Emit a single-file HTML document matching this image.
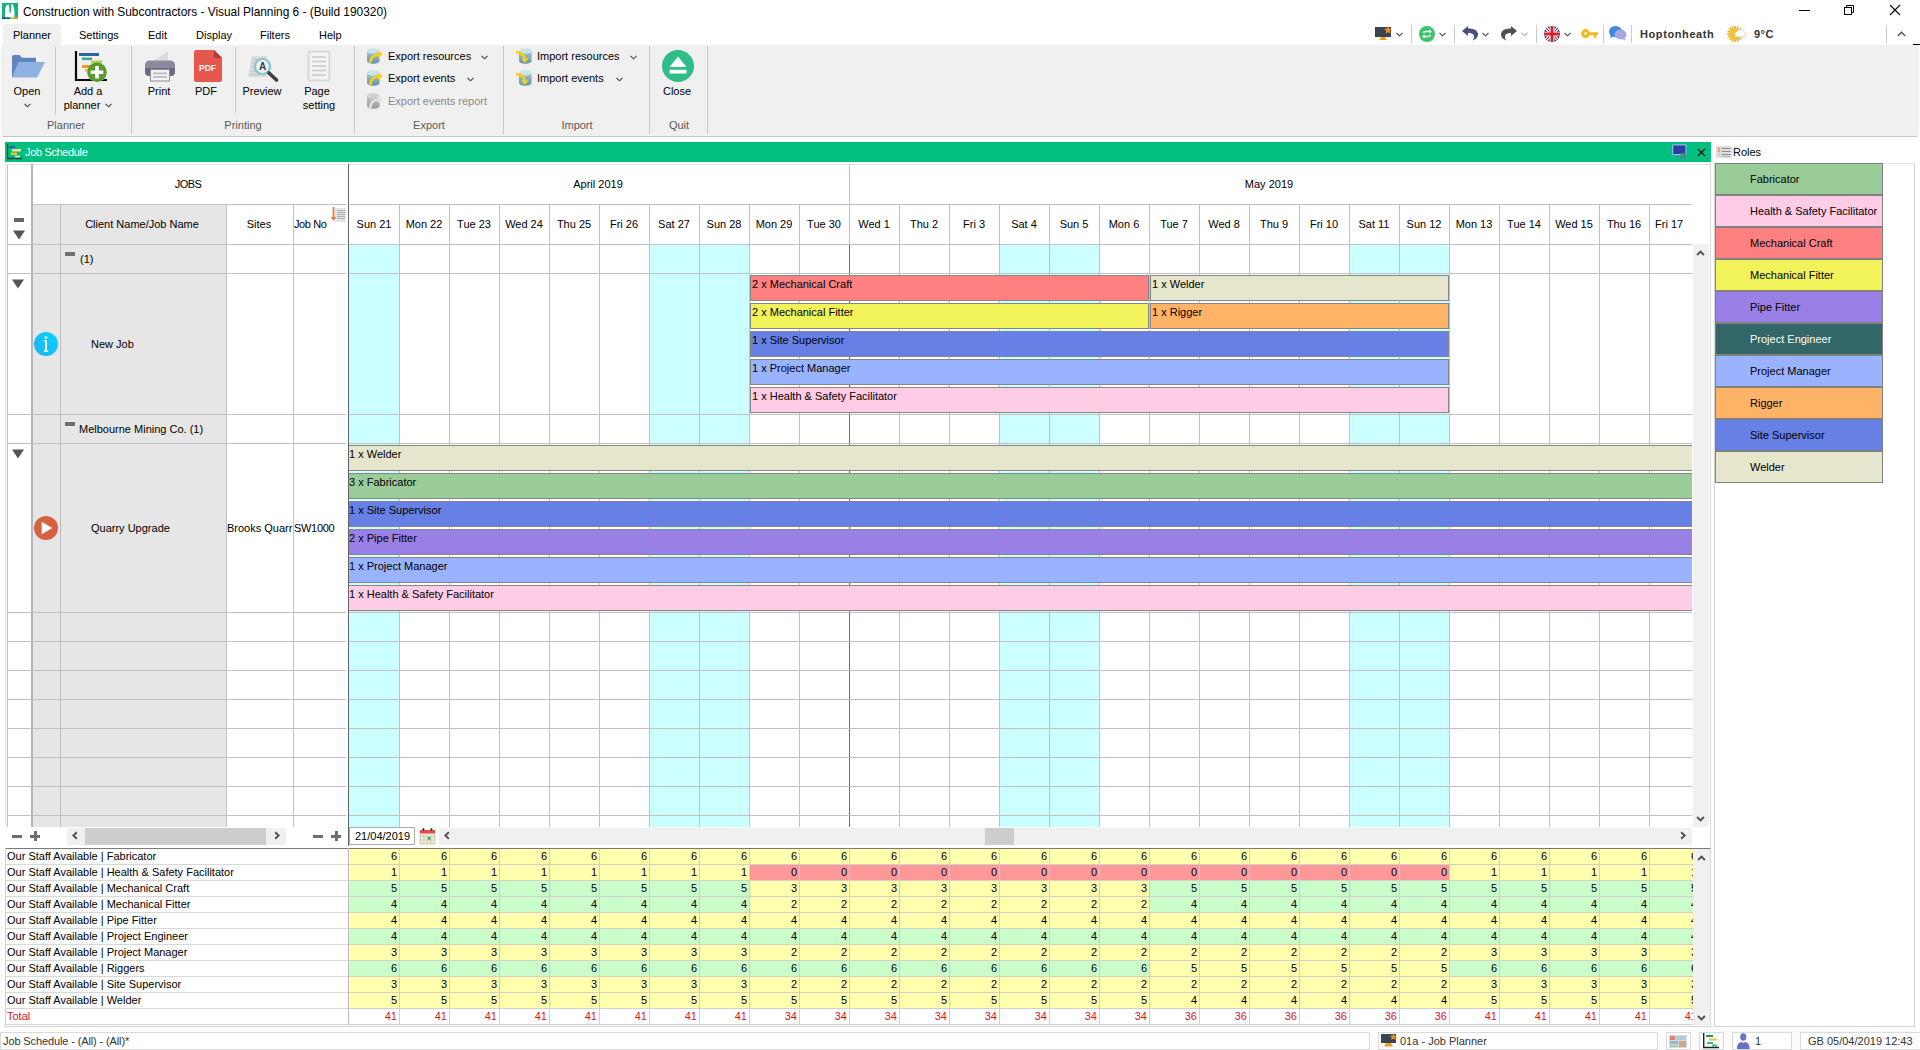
<!DOCTYPE html>
<html><head><meta charset="utf-8"><title>Job Schedule</title>
<style>
*{box-sizing:border-box;margin:0;padding:0}
html,body{width:1920px;height:1050px;overflow:hidden;background:#fff}
body{font-family:"Liberation Sans",sans-serif;font-size:11px;color:#000;position:relative}
.a{position:absolute}
.t{position:absolute;white-space:nowrap;line-height:14px;height:14px}
.c{text-align:center}
.r{text-align:right}
.vl{position:absolute;width:1px;background:#c1c1c1}
.hl{position:absolute;height:1px;background:#c1c1c1}
.bar{position:absolute;border:1px solid #868686;font-size:11px;line-height:13px;padding-top:2px;padding-left:1px;white-space:nowrap;overflow:hidden}
.role{position:absolute;left:1715px;width:168px;height:32px;border:1px solid #808080;line-height:30px;padding-left:34px;font-size:11px;white-space:nowrap}
.sep{position:absolute;width:1px;background:#c9c9c9}
.g{color:#5a5a5a}
.num{position:absolute;width:50px;height:16px;text-align:right;padding-right:2px;line-height:14px;font-size:11px}
</style></head><body>

<div class="a" style="left:0;top:0;width:1920px;height:45px;background:#fff"></div>
<svg class="a" style="left:2px;top:3px" width="16" height="16" viewBox="0 0 16 16"><rect width="16" height="16" fill="#11b57e"/><rect x="0" y="14.200" width="8" height="1.800" fill="#0b5f7a"/><rect x="8" y="14.200" width="4" height="1.800" fill="#9fcf50"/><rect x="12" y="14.200" width="4" height="1.800" fill="#e8a040"/><path d="M3 14.200V5.500L4.500 2.300 6.700 1.600 7.500 6v8.200z" fill="#fff"/><path d="M9 14.200V1.600h2L12.500 8v6.200z" fill="#fff"/><rect x="7" y="9.500" width="2.500" height="4.700" fill="#fff"/></svg>
<div class="t" style="left:23px;top:5px;font-size:11.9px;letter-spacing:-0.01px">Construction with Subcontractors - Visual Planning 6 - (Build 190320)</div>
<div class="a" style="left:1799px;top:10px;width:11px;height:1px;background:#000"></div>
<svg class="a" style="left:1844px;top:5px" width="11" height="11" viewBox="0 0 11 11" fill="none" stroke="#000" stroke-width="1"><rect x="0.5" y="2.5" width="7" height="7"/><path d="M2.500 2.500V0.500H9.500V7.500H7.500"/></svg>
<svg class="a" style="left:1889px;top:4px" width="12" height="12" viewBox="0 0 12 12" stroke="#000" stroke-width="1.100"><path d="M1 1L11 11M11 1L1 11"/></svg>
<div class="a" style="left:3px;top:24px;width:58px;height:22px;background:#f0f0f0;border-radius:3px 3px 0 0"></div>
<div class="t" style="left:13px;top:28px">Planner</div>
<div class="t" style="left:79px;top:28px">Settings</div>
<div class="t" style="left:148px;top:28px">Edit</div>
<div class="t" style="left:196px;top:28px">Display</div>
<div class="t" style="left:260px;top:28px">Filters</div>
<div class="t" style="left:319px;top:28px">Help</div>
<div class="a" style="left:1px;top:45px;width:1918px;height:91px;background:#f0f0f0;border-radius:0 3px 3px 3px"></div>
<div class="a" style="left:3px;top:136px;width:1914px;height:1px;background:#c6c6c6"></div>
<div class="sep" style="left:55px;top:47px;height:68px"></div>
<div class="sep" style="left:131px;top:46px;height:88px"></div>
<div class="sep" style="left:354px;top:46px;height:88px"></div>
<div class="sep" style="left:503px;top:46px;height:88px"></div>
<div class="sep" style="left:649px;top:46px;height:88px"></div>
<div class="sep" style="left:707px;top:46px;height:88px"></div>
<div class="sep" style="left:235px;top:47px;height:66px"></div>
<div class="t c g" style="left:26px;width:80px;top:118px">Planner</div>
<div class="t c g" style="left:203px;width:80px;top:118px">Printing</div>
<div class="t c g" style="left:389px;width:80px;top:118px">Export</div>
<div class="t c g" style="left:537px;width:80px;top:118px">Import</div>
<div class="t c g" style="left:639px;width:80px;top:118px">Quit</div>
<div class="t c " style="left:-13px;width:80px;top:84px">Open</div>
<div class="t c " style="left:48px;width:80px;top:84px">Add a</div>
<div class="t c " style="left:42px;width:80px;top:98px">planner</div>
<div class="t c " style="left:119px;width:80px;top:84px">Print</div>
<div class="t c " style="left:166px;width:80px;top:84px">PDF</div>
<div class="t c " style="left:222px;width:80px;top:84px">Preview</div>
<div class="t c " style="left:277px;width:80px;top:84px">Page</div>
<div class="t c " style="left:279px;width:80px;top:98px">setting</div>
<div class="t c " style="left:637px;width:80px;top:84px">Close</div>
<svg class="a" style="left:24px;top:103px" width="7" height="5" viewBox="0 0 7 5" fill="none" stroke="#444" stroke-width="1.1"><path d="M0.5 0.8L3.5 3.8L6.5 0.8"/></svg>
<svg class="a" style="left:105px;top:103px" width="7" height="5" viewBox="0 0 7 5" fill="none" stroke="#444" stroke-width="1.1"><path d="M0.5 0.8L3.5 3.8L6.5 0.8"/></svg>
<svg class="a" style="left:12px;top:55px" width="33" height="23" viewBox="0 0 33 23"><path d="M0 2a2 2 0 0 1 2-2h5.500l2.500 2.800H24V22H0z" fill="#5f84be"/><path d="M6.500 7H33l-8 15.500H0z" fill="#8db2e2"/></svg>
<svg class="a" style="left:74px;top:51px" width="34" height="32" viewBox="0 0 34 32"><path d="M2 0v29h31" fill="none" stroke="#0a0a0a" stroke-width="2.200"/><rect x="5" y="2" width="20" height="3" fill="#2c62a8"/><rect x="8" y="6.500" width="10" height="2.600" fill="#35b08c"/><rect x="17" y="9.500" width="11" height="3" fill="#b4cf4e"/><rect x="8" y="14" width="8" height="3" fill="#f09a30"/><rect x="11" y="18" width="5" height="2.500" fill="#b4cf4e"/><circle cx="23" cy="21.300" r="9.800" fill="#5c9a30"/><path d="M23 15v12.600M16.700 21.300h12.600" stroke="#fff" stroke-width="3.600"/></svg>
<svg class="a" style="left:144px;top:51px" width="32" height="32" viewBox="0 0 32 32"><path d="M9.500 9.500L24 0.500v9z" fill="#dcdcdc"/><rect x="1" y="9.500" width="30" height="15.500" rx="4.500" fill="#8a8b9f"/><path d="M1 17h30v4a4 4 0 0 1-4 4H5a4 4 0 0 1-4-4z" fill="#6c6d82"/><rect x="6.500" y="18.500" width="19" height="11.500" fill="#f3f3f3" stroke="#8b8c98" stroke-width="1"/><rect x="9" y="21.500" width="14" height="1.800" fill="#bcbdc6"/><rect x="9" y="25" width="14" height="1.800" fill="#bcbdc6"/></svg>
<svg class="a" style="left:194px;top:50px" width="28" height="32" viewBox="0 0 28 32"><path d="M2.500 0h17.500l8 8v21.500a2.500 2.500 0 0 1-2.500 2.500H2.500A2.500 2.500 0 0 1 0 29.500V2.500A2.500 2.500 0 0 1 2.500 0z" fill="#e5574d"/><path d="M20 0l8 8h-6.500a1.500 1.500 0 0 1-1.500-1.500z" fill="#b8362f"/><text x="13.500" y="20.500" font-family="Liberation Sans" font-weight="bold" font-size="8.500" fill="#fff" text-anchor="middle">PDF</text></svg>
<svg class="a" style="left:246px;top:53px" width="34" height="30" viewBox="0 0 34 30"><path d="M6 3h15v21H2z" fill="#dadcdc"/><g stroke="#bccacc" stroke-width="1.200"><path d="M5 6h9M4.500 10h8M4 14h8M3.500 18h9M3 21.500h12"/></g><circle cx="16.500" cy="13.500" r="7.600" fill="#e6f3f5" stroke="#8fc3cd" stroke-width="2.400"/><text x="16.500" y="17.200" font-family="Liberation Sans" font-weight="bold" font-size="10" fill="#3a3a3a" text-anchor="middle">A</text><path d="M23 20l7.500 7" stroke="#3c4044" stroke-width="3.600" stroke-linecap="round"/></svg>
<svg class="a" style="left:307px;top:50px" width="24" height="32" viewBox="0 0 24 32"><rect x="1.500" y="1.500" width="21" height="29" rx="2" fill="#f3f3f3" stroke="#d3dbd8" stroke-width="2"/><g stroke="#c9c9c9" stroke-width="1.500"><path d="M5 7h14M5 11.500h14M5 16h14M5 20.500h14M5 25h14"/></g></svg>
<svg class="a" style="left:662px;top:50px" width="32" height="32" viewBox="0 0 34 34"><circle cx="17" cy="17" r="17" fill="#2ebd85"/><path d="M17 7l9 11H8z" fill="#fff"/><rect x="8" y="21" width="18" height="4" fill="#fff"/></svg>
<svg width="0" height="0" class="a"><defs><linearGradient id="dbg" x1="0" y1="0" x2="0" y2="1"><stop offset="0" stop-color="#a3c4ce"/><stop offset="1" stop-color="#6a93a8"/></linearGradient><linearGradient id="dbgg" x1="0" y1="0" x2="0" y2="1"><stop offset="0" stop-color="#c4c4c4"/><stop offset="1" stop-color="#9a9a9a"/></linearGradient></defs></svg>
<svg class="a" style="left:366px;top:47px" width="18" height="18" viewBox="0 0 18 18"><path d="M1 4v10c0 1.500 2.800 2.700 6.300 2.700s6.300-1.200 6.300-2.700V4z" fill="url(#dbg)"/><ellipse cx="7.3" cy="4" rx="6.300" ry="2.700" fill="#c8e4ec"/><path d="M4 16C5.500 10.500 6.500 8 12 7.700" fill="none" stroke="#f5d11e" stroke-width="2.600"/><path d="M11.300 3.800L17 6.800 12.200 11z" fill="#f5d11e"/></svg>
<svg class="a" style="left:366px;top:69px" width="18" height="18" viewBox="0 0 18 18"><path d="M1 4v10c0 1.500 2.800 2.700 6.300 2.700s6.300-1.200 6.300-2.700V4z" fill="url(#dbg)"/><ellipse cx="7.3" cy="4" rx="6.300" ry="2.700" fill="#c8e4ec"/><path d="M4 16C5.500 10.500 6.500 8 12 7.700" fill="none" stroke="#f5d11e" stroke-width="2.600"/><path d="M11.300 3.800L17 6.800 12.200 11z" fill="#f5d11e"/></svg>
<svg class="a" style="left:366px;top:92px" width="18" height="18" viewBox="0 0 18 18"><path d="M1 4v10c0 1.500 2.800 2.700 6.300 2.700s6.300-1.200 6.300-2.700V4z" fill="url(#dbgg)"/><ellipse cx="7.3" cy="4" rx="6.300" ry="2.700" fill="#d0d0d0"/><path d="M4 16C5.500 10.500 6.500 8 12 7.700" fill="none" stroke="#e2e2e2" stroke-width="2.600"/><path d="M11.300 3.800L17 6.800 12.200 11z" fill="#e2e2e2"/></svg>
<svg class="a" style="left:515px;top:47px" width="18" height="18" viewBox="0 0 18 18"><path d="M4 4v10c0 1.500 2.800 2.700 6.300 2.700s6.300-1.200 6.300-2.700V4z" fill="url(#dbg)"/><ellipse cx="10.3" cy="4" rx="6.300" ry="2.700" fill="#c8e4ec"/><path d="M1 5.200C7 5.500 9.500 8 9.800 12" fill="none" stroke="#f5d11e" stroke-width="2.800"/><path d="M6 11.500h7.600L9.800 16z" fill="#f5d11e"/></svg>
<svg class="a" style="left:515px;top:69px" width="18" height="18" viewBox="0 0 18 18"><path d="M4 4v10c0 1.500 2.800 2.700 6.300 2.700s6.300-1.200 6.300-2.700V4z" fill="url(#dbg)"/><ellipse cx="10.3" cy="4" rx="6.300" ry="2.700" fill="#c8e4ec"/><path d="M1 5.200C7 5.500 9.500 8 9.800 12" fill="none" stroke="#f5d11e" stroke-width="2.800"/><path d="M6 11.500h7.600L9.800 16z" fill="#f5d11e"/></svg>
<div class="t" style="left:388px;top:49px">Export resources</div>
<svg class="a" style="left:481px;top:55px" width="7" height="5" viewBox="0 0 7 5" fill="none" stroke="#444" stroke-width="1.1"><path d="M0.5 0.8L3.5 3.8L6.5 0.8"/></svg>
<div class="t" style="left:388px;top:71px">Export events</div>
<svg class="a" style="left:467px;top:77px" width="7" height="5" viewBox="0 0 7 5" fill="none" stroke="#444" stroke-width="1.1"><path d="M0.5 0.8L3.5 3.8L6.5 0.8"/></svg>
<div class="t" style="left:388px;top:94px;color:#8a8a8a">Export events report</div>
<div class="t" style="left:537px;top:49px">Import resources</div>
<svg class="a" style="left:630px;top:55px" width="7" height="5" viewBox="0 0 7 5" fill="none" stroke="#444" stroke-width="1.1"><path d="M0.5 0.8L3.5 3.8L6.5 0.8"/></svg>
<div class="t" style="left:537px;top:71px">Import events</div>
<svg class="a" style="left:616px;top:77px" width="7" height="5" viewBox="0 0 7 5" fill="none" stroke="#444" stroke-width="1.1"><path d="M0.5 0.8L3.5 3.8L6.5 0.8"/></svg>
<svg class="a" style="left:1375px;top:26px" width="18" height="15" viewBox="0 0 18 15"><rect x="0" y="1" width="16" height="10" fill="#3b4252"/><path d="M6 11h4l2 3H4z" fill="#e8a020"/><path d="M13 0l1.2 2.6 2.8.3-2.1 1.9.6 2.8L13 6.2 10.5 7.6l.6-2.8L9 2.9l2.8-.3z" fill="#f08a1c"/></svg>
<svg class="a" style="left:1396px;top:32px" width="7" height="5" viewBox="0 0 7 5" fill="none" stroke="#444" stroke-width="1.1"><path d="M0.5 0.8L3.5 3.8L6.5 0.8"/></svg>
<div class="sep" style="left:1411px;top:25px;height:18px"></div>
<svg class="a" style="left:1419px;top:26px" width="16" height="16" viewBox="0 0 17 17"><circle cx="8.5" cy="8.5" r="8.5" fill="#3bc46a"/><path d="M4 7.5a3 3 0 0 1 3-2.5h4v-1.6l2.6 2.4L11 8.2V6.6H7A1.4 1.4 0 0 0 5.6 8zM13 9.5a3 3 0 0 1-3 2.5H6v1.6L3.4 11.2 6 8.8v1.6h4A1.4 1.4 0 0 0 11.4 9z" fill="#fff"/></svg>
<svg class="a" style="left:1439px;top:32px" width="7" height="5" viewBox="0 0 7 5" fill="none" stroke="#444" stroke-width="1.1"><path d="M0.5 0.8L3.5 3.8L6.5 0.8"/></svg>
<div class="sep" style="left:1454px;top:25px;height:18px"></div>
<svg class="a" style="left:1462px;top:26px" width="16" height="15" viewBox="0 0 16 15"><path d="M6 0L0 5l6 5V7c4 0 6 1 6 4 0 1.500-.6 2.500-2 3.500 4-1 6-3 6-6 0-4-4-6-10-6z" fill="#4a5078"/></svg>
<svg class="a" style="left:1482px;top:32px" width="7" height="5" viewBox="0 0 7 5" fill="none" stroke="#444" stroke-width="1.1"><path d="M0.5 0.8L3.5 3.8L6.5 0.8"/></svg>
<svg class="a" style="left:1501px;top:26px" width="16" height="15" viewBox="0 0 16 15"><path d="M10 0l6 5-6 5V7C6 7 4 8 4 11c0 1.500.6 2.500 2 3.500-4-1-6-3-6-6 0-4 4-6 10-6z" fill="#505050"/></svg>
<svg class="a" style="left:1521px;top:32px" width="7" height="5" viewBox="0 0 7 5" fill="none" stroke="#aaa" stroke-width="1.1"><path d="M0.5 0.8L3.5 3.8L6.5 0.8"/></svg>
<div class="sep" style="left:1536px;top:25px;height:18px"></div>
<svg class="a" style="left:1544px;top:26px" width="16" height="16" viewBox="0 0 17 17"><defs><clipPath id="fc"><circle cx="8.5" cy="8.500" r="8.500"/></clipPath></defs><g clip-path="url(#fc)"><rect width="17" height="17" fill="#2a3f8f"/><path d="M0 0L17 17M17 0L0 17" stroke="#fff" stroke-width="3.500"/><path d="M0 0L17 17M17 0L0 17" stroke="#d02030" stroke-width="1.2"/><path d="M8.500 0V17M0 8.500H17" stroke="#fff" stroke-width="5"/><path d="M8.500 0V17M0 8.500H17" stroke="#d02030" stroke-width="3"/></g></svg>
<svg class="a" style="left:1564px;top:32px" width="7" height="5" viewBox="0 0 7 5" fill="none" stroke="#444" stroke-width="1.1"><path d="M0.5 0.8L3.5 3.8L6.5 0.8"/></svg>
<svg class="a" style="left:1581px;top:29px" width="17" height="10" viewBox="0 0 17 10"><circle cx="4.600" cy="4.600" r="2.900" fill="none" stroke="#f5b81e" stroke-width="3.200"/><path d="M8 3.200h9v2.800h-1.600v2.800h-2.600v-2.800H8z" fill="#f5b81e"/></svg>
<div class="sep" style="left:1603px;top:25px;height:18px"></div>
<svg class="a" style="left:1609px;top:26px" width="18" height="15" viewBox="0 0 18 15"><ellipse cx="6.500" cy="5.500" rx="6.500" ry="5.500" fill="#3f86e8"/><path d="M2 8l-1 4 4-2z" fill="#3f86e8"/><ellipse cx="11.500" cy="8.500" rx="6" ry="5" fill="#a8a8dc"/><path d="M15 11l2 3.500-4.500-1.500z" fill="#a8a8dc"/></svg>
<div class="sep" style="left:1631px;top:25px;height:18px"></div>
<div class="t" style="left:1640px;top:27px;font-weight:bold;color:#333;letter-spacing:0.6px">Hoptonheath</div>
<svg class="a" style="left:1727px;top:26px" width="20" height="16" viewBox="0 0 20 16"><g stroke="#f0a818" stroke-width="1.600"><path d="M8 0v16M0 8h16M2.300 2.300l11.400 11.400M13.700 2.300L2.300 13.700M4.900 0.600l6.200 14.800M11.100 0.600L4.900 15.400M0.600 4.900l14.800 6.200M0.600 11.100l14.800-6.200"/></g><circle cx="8" cy="8" r="4.800" fill="#f7c524"/><path d="M9 11a3 3 0 0 1 1-5.500 4 4 0 0 1 7.500 1A2.400 2.400 0 0 1 17 11z" fill="#fff" stroke="#bbb" stroke-width=".7"/></svg>
<div class="t" style="left:1754px;top:27px;font-weight:bold;color:#333;letter-spacing:0.5px">9°C</div>
<div class="sep" style="left:1886px;top:25px;height:18px"></div>
<svg class="a" style="left:1897px;top:31px" width="9" height="6" viewBox="0 0 9 6" fill="none" stroke="#555" stroke-width="1.400"><path d="M0.700 5L4.500 1.200 8.300 5"/></svg>
<div class="a" style="left:1913px;top:44px;width:7px;height:1px;background:#000"></div>
<div class="a" style="left:5px;top:142px;width:1706px;height:20px;background:#00bf80"></div>
<svg class="a" style="left:7px;top:144px" width="16" height="16" viewBox="0 0 16 16"><path d="M0.500 0v14.500H15" fill="none" stroke="#14402a" stroke-width="1.400"/><rect x="2" y="2" width="6" height="2" fill="#2f5fb5"/><rect x="5" y="5" width="9" height="2.500" fill="#e8e2a0"/><rect x="4" y="8.500" width="6" height="2.500" fill="#f0c020"/><rect x="8" y="11.500" width="5" height="2" fill="#d9d9d9"/></svg>
<div class="t" style="left:25px;top:145px;color:#fff;letter-spacing:-0.35px">Job Schedule</div>
<svg class="a" style="left:1672px;top:144px" width="16" height="16" viewBox="0 0 16 16"><rect x="0.600" y="0.800" width="13.400" height="9.800" rx="0.800" fill="#2c3ea6" stroke="#86c4dc" stroke-width="1.200"/><circle cx="11" cy="12" r="2.600" fill="#3f8f8a"/><g stroke="#3f8f8a" stroke-width="1.300"><path d="M11 8.300v7.400M7.300 12h7.400M8.400 9.400l5.200 5.200M13.600 9.400l-5.200 5.200"/></g><circle cx="11" cy="12" r="1" fill="#19b07a"/><path d="M4 12.500h4" stroke="#4a8a88" stroke-width="1.200"/></svg>
<svg class="a" style="left:1697px;top:148px" width="9" height="9" viewBox="0 0 9 9" stroke="#111" stroke-width="1.200"><path d="M0.800 0.800L8 8M8 0.800L0.800 8"/></svg>
<div class="a" style="left:7px;top:164px;width:1703px;height:663px;background:#fff"></div>
<div class="vl" style="left:5px;top:163px;height:664px;background:#e6e6e6"></div>
<div class="vl" style="left:7px;top:164px;height:663px"></div>
<div class="hl" style="left:7px;top:164px;width:1703px;background:#dcdcdc"></div>
<div class="a" style="left:33px;top:205px;width:194px;height:622px;background:#e6e6e6"></div>
<div class="a" style="left:349px;top:244px;width:50px;height:583px;background:#ccffff"></div>
<div class="a" style="left:649px;top:244px;width:50px;height:583px;background:#ccffff"></div>
<div class="a" style="left:699px;top:244px;width:50px;height:583px;background:#ccffff"></div>
<div class="a" style="left:999px;top:244px;width:50px;height:583px;background:#ccffff"></div>
<div class="a" style="left:1049px;top:244px;width:50px;height:583px;background:#ccffff"></div>
<div class="a" style="left:1349px;top:244px;width:50px;height:583px;background:#ccffff"></div>
<div class="a" style="left:1399px;top:244px;width:50px;height:583px;background:#ccffff"></div>
<div class="vl" style="left:399px;top:205px;height:622px"></div>
<div class="vl" style="left:449px;top:205px;height:622px"></div>
<div class="vl" style="left:499px;top:205px;height:622px"></div>
<div class="vl" style="left:549px;top:205px;height:622px"></div>
<div class="vl" style="left:599px;top:205px;height:622px"></div>
<div class="vl" style="left:649px;top:205px;height:622px"></div>
<div class="vl" style="left:699px;top:205px;height:622px"></div>
<div class="vl" style="left:749px;top:205px;height:622px"></div>
<div class="vl" style="left:799px;top:205px;height:622px"></div>
<div class="vl" style="left:849px;top:165px;height:662px"></div>
<div class="vl" style="left:849px;top:245px;height:582px;background:#707070"></div>
<div class="vl" style="left:899px;top:205px;height:622px"></div>
<div class="vl" style="left:949px;top:205px;height:622px"></div>
<div class="vl" style="left:999px;top:205px;height:622px"></div>
<div class="vl" style="left:1049px;top:205px;height:622px"></div>
<div class="vl" style="left:1099px;top:205px;height:622px"></div>
<div class="vl" style="left:1149px;top:205px;height:622px"></div>
<div class="vl" style="left:1199px;top:205px;height:622px"></div>
<div class="vl" style="left:1249px;top:205px;height:622px"></div>
<div class="vl" style="left:1299px;top:205px;height:622px"></div>
<div class="vl" style="left:1349px;top:205px;height:622px"></div>
<div class="vl" style="left:1399px;top:205px;height:622px"></div>
<div class="vl" style="left:1449px;top:205px;height:622px"></div>
<div class="vl" style="left:1499px;top:205px;height:622px"></div>
<div class="vl" style="left:1549px;top:205px;height:622px"></div>
<div class="vl" style="left:1599px;top:205px;height:622px"></div>
<div class="vl" style="left:1649px;top:205px;height:622px"></div>
<div class="a" style="left:31px;top:164px;width:2px;height:663px;background:#b6b6b6"></div>
<div class="vl" style="left:60px;top:205px;height:622px;background:#bdbdbd"></div>
<div class="vl" style="left:226px;top:205px;height:622px"></div>
<div class="vl" style="left:293px;top:205px;height:622px"></div>
<div class="hl" style="left:33px;top:204px;width:1659px"></div>
<div class="hl" style="left:7px;top:244px;width:1685px"></div>
<div class="hl" style="left:7px;top:273px;width:1685px"></div>
<div class="hl" style="left:7px;top:414px;width:1685px"></div>
<div class="hl" style="left:7px;top:443px;width:1685px"></div>
<div class="hl" style="left:7px;top:612px;width:1685px"></div>
<div class="hl" style="left:7px;top:641px;width:1685px"></div>
<div class="hl" style="left:7px;top:670px;width:1685px"></div>
<div class="hl" style="left:7px;top:699px;width:1685px"></div>
<div class="hl" style="left:7px;top:728px;width:1685px"></div>
<div class="hl" style="left:7px;top:757px;width:1685px"></div>
<div class="hl" style="left:7px;top:786px;width:1685px"></div>
<div class="hl" style="left:7px;top:815px;width:1685px"></div>
<div class="a" style="left:346px;top:164px;width:2px;height:663px;background:#fff"></div>
<div class="t c" style="left:148px;width:80px;top:177px;letter-spacing:-0.5px">JOBS</div>
<div class="t c" style="left:548px;width:100px;top:177px">April 2019</div>
<div class="t c" style="left:1219px;width:100px;top:177px">May 2019</div>
<div class="t c" style="left:62px;width:160px;top:217px">Client Name/Job Name</div>
<div class="t c" style="left:228px;width:62px;top:217px">Sites</div>
<div class="t" style="left:294px;top:217px;letter-spacing:-0.4px">Job No</div>
<svg class="a" style="left:330px;top:207px" width="17" height="17" viewBox="0 0 17 17"><rect x="5" y="1" width="11" height="14" fill="#e4e4e4"/><g stroke="#b0b0b0" stroke-width="1"><path d="M7 3.500h8M7 5.500h8M7 7.500h8M7 9.500h8M7 11.500h8"/></g><path d="M3.500 0v12" stroke="#e8823a" stroke-width="1.800"/><path d="M0.500 10l3 4 3-4z" fill="#e8823a"/></svg>
<div class="t c" style="left:349px;width:50px;top:217px">Sun 21</div>
<div class="t c" style="left:399px;width:50px;top:217px">Mon 22</div>
<div class="t c" style="left:449px;width:50px;top:217px">Tue 23</div>
<div class="t c" style="left:499px;width:50px;top:217px">Wed 24</div>
<div class="t c" style="left:549px;width:50px;top:217px">Thu 25</div>
<div class="t c" style="left:599px;width:50px;top:217px">Fri 26</div>
<div class="t c" style="left:649px;width:50px;top:217px">Sat 27</div>
<div class="t c" style="left:699px;width:50px;top:217px">Sun 28</div>
<div class="t c" style="left:749px;width:50px;top:217px">Mon 29</div>
<div class="t c" style="left:799px;width:50px;top:217px">Tue 30</div>
<div class="t c" style="left:849px;width:50px;top:217px">Wed 1</div>
<div class="t c" style="left:899px;width:50px;top:217px">Thu 2</div>
<div class="t c" style="left:949px;width:50px;top:217px">Fri 3</div>
<div class="t c" style="left:999px;width:50px;top:217px">Sat 4</div>
<div class="t c" style="left:1049px;width:50px;top:217px">Sun 5</div>
<div class="t c" style="left:1099px;width:50px;top:217px">Mon 6</div>
<div class="t c" style="left:1149px;width:50px;top:217px">Tue 7</div>
<div class="t c" style="left:1199px;width:50px;top:217px">Wed 8</div>
<div class="t c" style="left:1249px;width:50px;top:217px">Thu 9</div>
<div class="t c" style="left:1299px;width:50px;top:217px">Fri 10</div>
<div class="t c" style="left:1349px;width:50px;top:217px">Sat 11</div>
<div class="t c" style="left:1399px;width:50px;top:217px">Sun 12</div>
<div class="t c" style="left:1449px;width:50px;top:217px">Mon 13</div>
<div class="t c" style="left:1499px;width:50px;top:217px">Tue 14</div>
<div class="t c" style="left:1549px;width:50px;top:217px">Wed 15</div>
<div class="t c" style="left:1599px;width:50px;top:217px">Thu 16</div>
<div class="t" style="left:1655px;top:217px">Fri 17</div>
<div class="a" style="left:14px;top:218px;width:10px;height:4px;background:#666"></div>
<svg class="a" style="left:13px;top:230px" width="12" height="10" viewBox="0 0 12 10"><path d="M0 0.500h12L6 9.500z" fill="#555"/></svg>
<svg class="a" style="left:12px;top:279px" width="12" height="10" viewBox="0 0 12 10"><path d="M0 0.500h12L6 9.500z" fill="#555"/></svg>
<svg class="a" style="left:12px;top:449px" width="12" height="10" viewBox="0 0 12 10"><path d="M0 0.500h12L6 9.500z" fill="#555"/></svg>
<div class="a" style="left:65px;top:252px;width:10px;height:4px;background:#6e6e6e"></div>
<div class="a" style="left:65px;top:422px;width:10px;height:4px;background:#6e6e6e"></div>
<div class="t" style="left:80px;top:252px">(1)</div>
<div class="t" style="left:79px;top:422px">Melbourne Mining Co. (1)</div>
<div class="t" style="left:91px;top:337px">New Job</div>
<div class="t" style="left:91px;top:521px">Quarry Upgrade</div>
<div class="t" style="left:227px;top:521px">Brooks Quarr</div>
<div class="t" style="left:294px;top:521px;letter-spacing:-0.3px">SW1000</div>
<svg class="a" style="left:34px;top:332px" width="24" height="24" viewBox="0 0 24 24"><defs><linearGradient id="ig" x1="0" y1="1" x2="1" y2="0"><stop offset="0" stop-color="#22aef2"/><stop offset="1" stop-color="#04d6fe"/></linearGradient></defs><circle cx="12" cy="12" r="12" fill="url(#ig)"/><rect x="11" y="8.300" width="2" height="11.500" fill="#e8fbff"/><rect x="9.800" y="8.300" width="2.200" height="1.300" fill="#e8fbff"/><rect x="9.800" y="18.500" width="4.400" height="1.300" fill="#e8fbff"/><circle cx="12" cy="5.600" r="1.350" fill="#e8fbff"/></svg>
<svg class="a" style="left:34px;top:516px" width="24" height="24" viewBox="0 0 24 24"><defs><linearGradient id="pg" x1="0" y1="0" x2="1" y2="1"><stop offset="0" stop-color="#d4663f"/><stop offset="1" stop-color="#d95c45"/></linearGradient></defs><circle cx="12" cy="12" r="12" fill="url(#pg)"/><path d="M7.700 5.800L18.300 12 7.700 18.300z" fill="#fff"/></svg>
<div class="bar" style="left:750px;top:275px;width:399px;height:26px;background:#ff8080">2 x Mechanical Craft</div>
<div class="bar" style="left:1150px;top:275px;width:299px;height:26px;background:#e6e6cc">1 x Welder</div>
<div class="bar" style="left:750px;top:303px;width:399px;height:26px;background:#f2f25a">2 x Mechanical Fitter</div>
<div class="bar" style="left:1150px;top:303px;width:299px;height:26px;background:#ffb366">1 x Rigger</div>
<div class="bar" style="left:750px;top:331px;width:699px;height:26px;background:#6680e6">1 x Site Supervisor</div>
<div class="bar" style="left:750px;top:359px;width:699px;height:26px;background:#99b3ff">1 x Project Manager</div>
<div class="bar" style="left:750px;top:387px;width:699px;height:26px;background:#ffcce6">1 x Health &amp; Safety Facilitator</div>
<div class="bar" style="left:349px;top:445px;width:1343px;height:26px;background:#e6e6cc;border-left:0;border-right:0;padding-left:0">1 x Welder</div>
<div class="bar" style="left:349px;top:473px;width:1343px;height:26px;background:#99cc99;border-left:0;border-right:0;padding-left:0">3 x Fabricator</div>
<div class="bar" style="left:349px;top:501px;width:1343px;height:26px;background:#6680e6;border-left:0;border-right:0;padding-left:0">1 x Site Supervisor</div>
<div class="bar" style="left:349px;top:529px;width:1343px;height:26px;background:#9980e6;border-left:0;border-right:0;padding-left:0">2 x Pipe Fitter</div>
<div class="bar" style="left:349px;top:557px;width:1343px;height:26px;background:#99b3ff;border-left:0;border-right:0;padding-left:0">1 x Project Manager</div>
<div class="bar" style="left:349px;top:585px;width:1343px;height:26px;background:#ffcce6;border-left:0;border-right:0;padding-left:0">1 x Health &amp; Safety Facilitator</div>
<div class="a" style="left:1693px;top:244px;width:16px;height:583px;background:#f0f0f0"></div>
<svg class="a" style="left:1696px;top:250px" width="9" height="6" viewBox="0 0 9 6" fill="none" stroke="#505050" stroke-width="1.900"><path d="M1.100 5L4.500 1.500 7.900 5"/></svg>
<svg class="a" style="left:1696px;top:816px" width="9" height="6" viewBox="0 0 9 6" fill="none" stroke="#505050" stroke-width="1.900"><path d="M1.100 1L4.500 4.500 7.900 1"/></svg>
<div class="a" style="left:5px;top:827px;width:1706px;height:22px;background:#fff"></div>
<div class="a" style="left:12px;top:835px;width:10px;height:3px;background:#6e6e6e"></div>
<div class="a" style="left:30px;top:835px;width:10px;height:3px;background:#6e6e6e"></div><div class="a" style="left:34px;top:831px;width:3px;height:10px;background:#6e6e6e"></div>
<div class="a" style="left:67px;top:828px;width:219px;height:17px;background:#f0f0f0"></div>
<div class="a" style="left:85px;top:828px;width:181px;height:17px;background:#cdcdcd"></div>
<svg class="a" style="left:72px;top:831px" width="6" height="9" viewBox="0 0 6 9" fill="none" stroke="#505050" stroke-width="1.900"><path d="M4.800 1.200L1.300 4.500 4.800 7.800"/></svg>
<svg class="a" style="left:274px;top:831px" width="6" height="9" viewBox="0 0 6 9" fill="none" stroke="#505050" stroke-width="1.900"><path d="M1.200 1.200L4.700 4.500 1.200 7.800"/></svg>
<div class="a" style="left:313px;top:835px;width:10px;height:3px;background:#6e6e6e"></div>
<div class="a" style="left:331px;top:835px;width:10px;height:3px;background:#6e6e6e"></div><div class="a" style="left:335px;top:831px;width:3px;height:10px;background:#6e6e6e"></div>
<div class="a" style="left:349px;top:827px;width:66px;height:18px;border:1px solid #adadad;background:#fff"></div>
<div class="t" style="left:355px;top:829px">21/04/2019</div>
<div class="a" style="left:348px;top:164px;width:1px;height:682px;background:#636363"></div>
<svg class="a" style="left:419px;top:828px" width="17" height="17" viewBox="0 0 17 17"><rect x="1" y="3" width="15" height="13" fill="#ece8d8" stroke="#c8c0a8" stroke-width=".8"/><rect x="1" y="2" width="15" height="3.500" fill="#e05048"/><rect x="3.500" y="0.300" width="1.800" height="2.200" fill="#3a1818"/><rect x="11.500" y="0.300" width="1.800" height="2.200" fill="#3a1818"/><g stroke="#cfc8b0" stroke-width=".7"><path d="M1 8.500h15M1 12h15M5 5.500v10.500M8.500 5.500v10.500M12 5.500v10.500"/></g><rect x="8.800" y="9" width="2.800" height="2.600" fill="#38a860"/></svg>
<div class="a" style="left:439px;top:828px;width:1253px;height:17px;background:#f0f0f0"></div>
<div class="a" style="left:985px;top:828px;width:29px;height:17px;background:#cdcdcd"></div>
<svg class="a" style="left:444px;top:831px" width="6" height="9" viewBox="0 0 6 9" fill="none" stroke="#505050" stroke-width="1.900"><path d="M4.800 1.200L1.300 4.500 4.800 7.800"/></svg>
<svg class="a" style="left:1680px;top:831px" width="6" height="9" viewBox="0 0 6 9" fill="none" stroke="#505050" stroke-width="1.900"><path d="M1.200 1.200L4.700 4.500 1.200 7.800"/></svg>
<div class="a" style="left:5px;top:848px;width:1705px;height:1px;background:#7a7a7a"></div>
<div class="a" style="left:349px;top:849px;width:1344px;height:176px;overflow:hidden">
<div class="a" style="left:0px;top:0px;width:1350px;height:16px;background:#ffffae"></div>
<div class="num" style="left:0px;top:0px">6</div>
<div class="num" style="left:50px;top:0px">6</div>
<div class="num" style="left:100px;top:0px">6</div>
<div class="num" style="left:150px;top:0px">6</div>
<div class="num" style="left:200px;top:0px">6</div>
<div class="num" style="left:250px;top:0px">6</div>
<div class="num" style="left:300px;top:0px">6</div>
<div class="num" style="left:350px;top:0px">6</div>
<div class="num" style="left:400px;top:0px">6</div>
<div class="num" style="left:450px;top:0px">6</div>
<div class="num" style="left:500px;top:0px">6</div>
<div class="num" style="left:550px;top:0px">6</div>
<div class="num" style="left:600px;top:0px">6</div>
<div class="num" style="left:650px;top:0px">6</div>
<div class="num" style="left:700px;top:0px">6</div>
<div class="num" style="left:750px;top:0px">6</div>
<div class="num" style="left:800px;top:0px">6</div>
<div class="num" style="left:850px;top:0px">6</div>
<div class="num" style="left:900px;top:0px">6</div>
<div class="num" style="left:950px;top:0px">6</div>
<div class="num" style="left:1000px;top:0px">6</div>
<div class="num" style="left:1050px;top:0px">6</div>
<div class="num" style="left:1100px;top:0px">6</div>
<div class="num" style="left:1150px;top:0px">6</div>
<div class="num" style="left:1200px;top:0px">6</div>
<div class="num" style="left:1250px;top:0px">6</div>
<div class="num" style="left:1300px;top:0px">6</div>
<div class="a" style="left:0px;top:16px;width:400px;height:16px;background:#ffffae"></div>
<div class="a" style="left:400px;top:16px;width:700px;height:16px;background:#ff9999"></div>
<div class="a" style="left:1100px;top:16px;width:250px;height:16px;background:#ffffae"></div>
<div class="num" style="left:0px;top:16px">1</div>
<div class="num" style="left:50px;top:16px">1</div>
<div class="num" style="left:100px;top:16px">1</div>
<div class="num" style="left:150px;top:16px">1</div>
<div class="num" style="left:200px;top:16px">1</div>
<div class="num" style="left:250px;top:16px">1</div>
<div class="num" style="left:300px;top:16px">1</div>
<div class="num" style="left:350px;top:16px">1</div>
<div class="num" style="left:400px;top:16px">0</div>
<div class="num" style="left:450px;top:16px">0</div>
<div class="num" style="left:500px;top:16px">0</div>
<div class="num" style="left:550px;top:16px">0</div>
<div class="num" style="left:600px;top:16px">0</div>
<div class="num" style="left:650px;top:16px">0</div>
<div class="num" style="left:700px;top:16px">0</div>
<div class="num" style="left:750px;top:16px">0</div>
<div class="num" style="left:800px;top:16px">0</div>
<div class="num" style="left:850px;top:16px">0</div>
<div class="num" style="left:900px;top:16px">0</div>
<div class="num" style="left:950px;top:16px">0</div>
<div class="num" style="left:1000px;top:16px">0</div>
<div class="num" style="left:1050px;top:16px">0</div>
<div class="num" style="left:1100px;top:16px">1</div>
<div class="num" style="left:1150px;top:16px">1</div>
<div class="num" style="left:1200px;top:16px">1</div>
<div class="num" style="left:1250px;top:16px">1</div>
<div class="num" style="left:1300px;top:16px">1</div>
<div class="a" style="left:0px;top:32px;width:400px;height:16px;background:#cafdca"></div>
<div class="a" style="left:400px;top:32px;width:400px;height:16px;background:#ffffae"></div>
<div class="a" style="left:800px;top:32px;width:550px;height:16px;background:#cafdca"></div>
<div class="num" style="left:0px;top:32px">5</div>
<div class="num" style="left:50px;top:32px">5</div>
<div class="num" style="left:100px;top:32px">5</div>
<div class="num" style="left:150px;top:32px">5</div>
<div class="num" style="left:200px;top:32px">5</div>
<div class="num" style="left:250px;top:32px">5</div>
<div class="num" style="left:300px;top:32px">5</div>
<div class="num" style="left:350px;top:32px">5</div>
<div class="num" style="left:400px;top:32px">3</div>
<div class="num" style="left:450px;top:32px">3</div>
<div class="num" style="left:500px;top:32px">3</div>
<div class="num" style="left:550px;top:32px">3</div>
<div class="num" style="left:600px;top:32px">3</div>
<div class="num" style="left:650px;top:32px">3</div>
<div class="num" style="left:700px;top:32px">3</div>
<div class="num" style="left:750px;top:32px">3</div>
<div class="num" style="left:800px;top:32px">5</div>
<div class="num" style="left:850px;top:32px">5</div>
<div class="num" style="left:900px;top:32px">5</div>
<div class="num" style="left:950px;top:32px">5</div>
<div class="num" style="left:1000px;top:32px">5</div>
<div class="num" style="left:1050px;top:32px">5</div>
<div class="num" style="left:1100px;top:32px">5</div>
<div class="num" style="left:1150px;top:32px">5</div>
<div class="num" style="left:1200px;top:32px">5</div>
<div class="num" style="left:1250px;top:32px">5</div>
<div class="num" style="left:1300px;top:32px">5</div>
<div class="a" style="left:0px;top:48px;width:400px;height:16px;background:#cafdca"></div>
<div class="a" style="left:400px;top:48px;width:400px;height:16px;background:#ffffae"></div>
<div class="a" style="left:800px;top:48px;width:550px;height:16px;background:#cafdca"></div>
<div class="num" style="left:0px;top:48px">4</div>
<div class="num" style="left:50px;top:48px">4</div>
<div class="num" style="left:100px;top:48px">4</div>
<div class="num" style="left:150px;top:48px">4</div>
<div class="num" style="left:200px;top:48px">4</div>
<div class="num" style="left:250px;top:48px">4</div>
<div class="num" style="left:300px;top:48px">4</div>
<div class="num" style="left:350px;top:48px">4</div>
<div class="num" style="left:400px;top:48px">2</div>
<div class="num" style="left:450px;top:48px">2</div>
<div class="num" style="left:500px;top:48px">2</div>
<div class="num" style="left:550px;top:48px">2</div>
<div class="num" style="left:600px;top:48px">2</div>
<div class="num" style="left:650px;top:48px">2</div>
<div class="num" style="left:700px;top:48px">2</div>
<div class="num" style="left:750px;top:48px">2</div>
<div class="num" style="left:800px;top:48px">4</div>
<div class="num" style="left:850px;top:48px">4</div>
<div class="num" style="left:900px;top:48px">4</div>
<div class="num" style="left:950px;top:48px">4</div>
<div class="num" style="left:1000px;top:48px">4</div>
<div class="num" style="left:1050px;top:48px">4</div>
<div class="num" style="left:1100px;top:48px">4</div>
<div class="num" style="left:1150px;top:48px">4</div>
<div class="num" style="left:1200px;top:48px">4</div>
<div class="num" style="left:1250px;top:48px">4</div>
<div class="num" style="left:1300px;top:48px">4</div>
<div class="a" style="left:0px;top:64px;width:1350px;height:16px;background:#ffffae"></div>
<div class="num" style="left:0px;top:64px">4</div>
<div class="num" style="left:50px;top:64px">4</div>
<div class="num" style="left:100px;top:64px">4</div>
<div class="num" style="left:150px;top:64px">4</div>
<div class="num" style="left:200px;top:64px">4</div>
<div class="num" style="left:250px;top:64px">4</div>
<div class="num" style="left:300px;top:64px">4</div>
<div class="num" style="left:350px;top:64px">4</div>
<div class="num" style="left:400px;top:64px">4</div>
<div class="num" style="left:450px;top:64px">4</div>
<div class="num" style="left:500px;top:64px">4</div>
<div class="num" style="left:550px;top:64px">4</div>
<div class="num" style="left:600px;top:64px">4</div>
<div class="num" style="left:650px;top:64px">4</div>
<div class="num" style="left:700px;top:64px">4</div>
<div class="num" style="left:750px;top:64px">4</div>
<div class="num" style="left:800px;top:64px">4</div>
<div class="num" style="left:850px;top:64px">4</div>
<div class="num" style="left:900px;top:64px">4</div>
<div class="num" style="left:950px;top:64px">4</div>
<div class="num" style="left:1000px;top:64px">4</div>
<div class="num" style="left:1050px;top:64px">4</div>
<div class="num" style="left:1100px;top:64px">4</div>
<div class="num" style="left:1150px;top:64px">4</div>
<div class="num" style="left:1200px;top:64px">4</div>
<div class="num" style="left:1250px;top:64px">4</div>
<div class="num" style="left:1300px;top:64px">4</div>
<div class="a" style="left:0px;top:80px;width:1350px;height:16px;background:#cafdca"></div>
<div class="num" style="left:0px;top:80px">4</div>
<div class="num" style="left:50px;top:80px">4</div>
<div class="num" style="left:100px;top:80px">4</div>
<div class="num" style="left:150px;top:80px">4</div>
<div class="num" style="left:200px;top:80px">4</div>
<div class="num" style="left:250px;top:80px">4</div>
<div class="num" style="left:300px;top:80px">4</div>
<div class="num" style="left:350px;top:80px">4</div>
<div class="num" style="left:400px;top:80px">4</div>
<div class="num" style="left:450px;top:80px">4</div>
<div class="num" style="left:500px;top:80px">4</div>
<div class="num" style="left:550px;top:80px">4</div>
<div class="num" style="left:600px;top:80px">4</div>
<div class="num" style="left:650px;top:80px">4</div>
<div class="num" style="left:700px;top:80px">4</div>
<div class="num" style="left:750px;top:80px">4</div>
<div class="num" style="left:800px;top:80px">4</div>
<div class="num" style="left:850px;top:80px">4</div>
<div class="num" style="left:900px;top:80px">4</div>
<div class="num" style="left:950px;top:80px">4</div>
<div class="num" style="left:1000px;top:80px">4</div>
<div class="num" style="left:1050px;top:80px">4</div>
<div class="num" style="left:1100px;top:80px">4</div>
<div class="num" style="left:1150px;top:80px">4</div>
<div class="num" style="left:1200px;top:80px">4</div>
<div class="num" style="left:1250px;top:80px">4</div>
<div class="num" style="left:1300px;top:80px">4</div>
<div class="a" style="left:0px;top:96px;width:1350px;height:16px;background:#ffffae"></div>
<div class="num" style="left:0px;top:96px">3</div>
<div class="num" style="left:50px;top:96px">3</div>
<div class="num" style="left:100px;top:96px">3</div>
<div class="num" style="left:150px;top:96px">3</div>
<div class="num" style="left:200px;top:96px">3</div>
<div class="num" style="left:250px;top:96px">3</div>
<div class="num" style="left:300px;top:96px">3</div>
<div class="num" style="left:350px;top:96px">3</div>
<div class="num" style="left:400px;top:96px">2</div>
<div class="num" style="left:450px;top:96px">2</div>
<div class="num" style="left:500px;top:96px">2</div>
<div class="num" style="left:550px;top:96px">2</div>
<div class="num" style="left:600px;top:96px">2</div>
<div class="num" style="left:650px;top:96px">2</div>
<div class="num" style="left:700px;top:96px">2</div>
<div class="num" style="left:750px;top:96px">2</div>
<div class="num" style="left:800px;top:96px">2</div>
<div class="num" style="left:850px;top:96px">2</div>
<div class="num" style="left:900px;top:96px">2</div>
<div class="num" style="left:950px;top:96px">2</div>
<div class="num" style="left:1000px;top:96px">2</div>
<div class="num" style="left:1050px;top:96px">2</div>
<div class="num" style="left:1100px;top:96px">3</div>
<div class="num" style="left:1150px;top:96px">3</div>
<div class="num" style="left:1200px;top:96px">3</div>
<div class="num" style="left:1250px;top:96px">3</div>
<div class="num" style="left:1300px;top:96px">3</div>
<div class="a" style="left:0px;top:112px;width:800px;height:16px;background:#cafdca"></div>
<div class="a" style="left:800px;top:112px;width:300px;height:16px;background:#ffffae"></div>
<div class="a" style="left:1100px;top:112px;width:250px;height:16px;background:#cafdca"></div>
<div class="num" style="left:0px;top:112px">6</div>
<div class="num" style="left:50px;top:112px">6</div>
<div class="num" style="left:100px;top:112px">6</div>
<div class="num" style="left:150px;top:112px">6</div>
<div class="num" style="left:200px;top:112px">6</div>
<div class="num" style="left:250px;top:112px">6</div>
<div class="num" style="left:300px;top:112px">6</div>
<div class="num" style="left:350px;top:112px">6</div>
<div class="num" style="left:400px;top:112px">6</div>
<div class="num" style="left:450px;top:112px">6</div>
<div class="num" style="left:500px;top:112px">6</div>
<div class="num" style="left:550px;top:112px">6</div>
<div class="num" style="left:600px;top:112px">6</div>
<div class="num" style="left:650px;top:112px">6</div>
<div class="num" style="left:700px;top:112px">6</div>
<div class="num" style="left:750px;top:112px">6</div>
<div class="num" style="left:800px;top:112px">5</div>
<div class="num" style="left:850px;top:112px">5</div>
<div class="num" style="left:900px;top:112px">5</div>
<div class="num" style="left:950px;top:112px">5</div>
<div class="num" style="left:1000px;top:112px">5</div>
<div class="num" style="left:1050px;top:112px">5</div>
<div class="num" style="left:1100px;top:112px">6</div>
<div class="num" style="left:1150px;top:112px">6</div>
<div class="num" style="left:1200px;top:112px">6</div>
<div class="num" style="left:1250px;top:112px">6</div>
<div class="num" style="left:1300px;top:112px">6</div>
<div class="a" style="left:0px;top:128px;width:1350px;height:16px;background:#ffffae"></div>
<div class="num" style="left:0px;top:128px">3</div>
<div class="num" style="left:50px;top:128px">3</div>
<div class="num" style="left:100px;top:128px">3</div>
<div class="num" style="left:150px;top:128px">3</div>
<div class="num" style="left:200px;top:128px">3</div>
<div class="num" style="left:250px;top:128px">3</div>
<div class="num" style="left:300px;top:128px">3</div>
<div class="num" style="left:350px;top:128px">3</div>
<div class="num" style="left:400px;top:128px">2</div>
<div class="num" style="left:450px;top:128px">2</div>
<div class="num" style="left:500px;top:128px">2</div>
<div class="num" style="left:550px;top:128px">2</div>
<div class="num" style="left:600px;top:128px">2</div>
<div class="num" style="left:650px;top:128px">2</div>
<div class="num" style="left:700px;top:128px">2</div>
<div class="num" style="left:750px;top:128px">2</div>
<div class="num" style="left:800px;top:128px">2</div>
<div class="num" style="left:850px;top:128px">2</div>
<div class="num" style="left:900px;top:128px">2</div>
<div class="num" style="left:950px;top:128px">2</div>
<div class="num" style="left:1000px;top:128px">2</div>
<div class="num" style="left:1050px;top:128px">2</div>
<div class="num" style="left:1100px;top:128px">3</div>
<div class="num" style="left:1150px;top:128px">3</div>
<div class="num" style="left:1200px;top:128px">3</div>
<div class="num" style="left:1250px;top:128px">3</div>
<div class="num" style="left:1300px;top:128px">3</div>
<div class="a" style="left:0px;top:144px;width:1350px;height:16px;background:#ffffae"></div>
<div class="num" style="left:0px;top:144px">5</div>
<div class="num" style="left:50px;top:144px">5</div>
<div class="num" style="left:100px;top:144px">5</div>
<div class="num" style="left:150px;top:144px">5</div>
<div class="num" style="left:200px;top:144px">5</div>
<div class="num" style="left:250px;top:144px">5</div>
<div class="num" style="left:300px;top:144px">5</div>
<div class="num" style="left:350px;top:144px">5</div>
<div class="num" style="left:400px;top:144px">5</div>
<div class="num" style="left:450px;top:144px">5</div>
<div class="num" style="left:500px;top:144px">5</div>
<div class="num" style="left:550px;top:144px">5</div>
<div class="num" style="left:600px;top:144px">5</div>
<div class="num" style="left:650px;top:144px">5</div>
<div class="num" style="left:700px;top:144px">5</div>
<div class="num" style="left:750px;top:144px">5</div>
<div class="num" style="left:800px;top:144px">4</div>
<div class="num" style="left:850px;top:144px">4</div>
<div class="num" style="left:900px;top:144px">4</div>
<div class="num" style="left:950px;top:144px">4</div>
<div class="num" style="left:1000px;top:144px">4</div>
<div class="num" style="left:1050px;top:144px">4</div>
<div class="num" style="left:1100px;top:144px">5</div>
<div class="num" style="left:1150px;top:144px">5</div>
<div class="num" style="left:1200px;top:144px">5</div>
<div class="num" style="left:1250px;top:144px">5</div>
<div class="num" style="left:1300px;top:144px">5</div>
<div class="num" style="left:0px;top:160px;color:#d01818">41</div>
<div class="num" style="left:50px;top:160px;color:#d01818">41</div>
<div class="num" style="left:100px;top:160px;color:#d01818">41</div>
<div class="num" style="left:150px;top:160px;color:#d01818">41</div>
<div class="num" style="left:200px;top:160px;color:#d01818">41</div>
<div class="num" style="left:250px;top:160px;color:#d01818">41</div>
<div class="num" style="left:300px;top:160px;color:#d01818">41</div>
<div class="num" style="left:350px;top:160px;color:#d01818">41</div>
<div class="num" style="left:400px;top:160px;color:#d01818">34</div>
<div class="num" style="left:450px;top:160px;color:#d01818">34</div>
<div class="num" style="left:500px;top:160px;color:#d01818">34</div>
<div class="num" style="left:550px;top:160px;color:#d01818">34</div>
<div class="num" style="left:600px;top:160px;color:#d01818">34</div>
<div class="num" style="left:650px;top:160px;color:#d01818">34</div>
<div class="num" style="left:700px;top:160px;color:#d01818">34</div>
<div class="num" style="left:750px;top:160px;color:#d01818">34</div>
<div class="num" style="left:800px;top:160px;color:#d01818">36</div>
<div class="num" style="left:850px;top:160px;color:#d01818">36</div>
<div class="num" style="left:900px;top:160px;color:#d01818">36</div>
<div class="num" style="left:950px;top:160px;color:#d01818">36</div>
<div class="num" style="left:1000px;top:160px;color:#d01818">36</div>
<div class="num" style="left:1050px;top:160px;color:#d01818">36</div>
<div class="num" style="left:1100px;top:160px;color:#d01818">41</div>
<div class="num" style="left:1150px;top:160px;color:#d01818">41</div>
<div class="num" style="left:1200px;top:160px;color:#d01818">41</div>
<div class="num" style="left:1250px;top:160px;color:#d01818">41</div>
<div class="num" style="left:1300px;top:160px;color:#d01818">41</div>
<div class="vl" style="left:50px;top:0;height:176px;background:#d0d0d0"></div>
<div class="vl" style="left:100px;top:0;height:176px;background:#d0d0d0"></div>
<div class="vl" style="left:150px;top:0;height:176px;background:#d0d0d0"></div>
<div class="vl" style="left:200px;top:0;height:176px;background:#d0d0d0"></div>
<div class="vl" style="left:250px;top:0;height:176px;background:#d0d0d0"></div>
<div class="vl" style="left:300px;top:0;height:176px;background:#d0d0d0"></div>
<div class="vl" style="left:350px;top:0;height:176px;background:#d0d0d0"></div>
<div class="vl" style="left:400px;top:0;height:176px;background:#d0d0d0"></div>
<div class="vl" style="left:450px;top:0;height:176px;background:#d0d0d0"></div>
<div class="vl" style="left:500px;top:0;height:176px;background:#d0d0d0"></div>
<div class="vl" style="left:550px;top:0;height:176px;background:#d0d0d0"></div>
<div class="vl" style="left:600px;top:0;height:176px;background:#d0d0d0"></div>
<div class="vl" style="left:650px;top:0;height:176px;background:#d0d0d0"></div>
<div class="vl" style="left:700px;top:0;height:176px;background:#d0d0d0"></div>
<div class="vl" style="left:750px;top:0;height:176px;background:#d0d0d0"></div>
<div class="vl" style="left:800px;top:0;height:176px;background:#d0d0d0"></div>
<div class="vl" style="left:850px;top:0;height:176px;background:#d0d0d0"></div>
<div class="vl" style="left:900px;top:0;height:176px;background:#d0d0d0"></div>
<div class="vl" style="left:950px;top:0;height:176px;background:#d0d0d0"></div>
<div class="vl" style="left:1000px;top:0;height:176px;background:#d0d0d0"></div>
<div class="vl" style="left:1050px;top:0;height:176px;background:#d0d0d0"></div>
<div class="vl" style="left:1100px;top:0;height:176px;background:#d0d0d0"></div>
<div class="vl" style="left:1150px;top:0;height:176px;background:#d0d0d0"></div>
<div class="vl" style="left:1200px;top:0;height:176px;background:#d0d0d0"></div>
<div class="vl" style="left:1250px;top:0;height:176px;background:#d0d0d0"></div>
<div class="vl" style="left:1300px;top:0;height:176px;background:#d0d0d0"></div>
<div class="hl" style="left:0;top:15px;width:1400px;background:#d0d0d0"></div>
<div class="hl" style="left:0;top:31px;width:1400px;background:#d0d0d0"></div>
<div class="hl" style="left:0;top:47px;width:1400px;background:#d0d0d0"></div>
<div class="hl" style="left:0;top:63px;width:1400px;background:#d0d0d0"></div>
<div class="hl" style="left:0;top:79px;width:1400px;background:#d0d0d0"></div>
<div class="hl" style="left:0;top:95px;width:1400px;background:#d0d0d0"></div>
<div class="hl" style="left:0;top:111px;width:1400px;background:#d0d0d0"></div>
<div class="hl" style="left:0;top:127px;width:1400px;background:#d0d0d0"></div>
<div class="hl" style="left:0;top:143px;width:1400px;background:#d0d0d0"></div>
<div class="hl" style="left:0;top:159px;width:1400px;background:#d0d0d0"></div>
<div class="hl" style="left:0;top:175px;width:1400px;background:#d0d0d0"></div>
</div>
<div class="t" style="left:7px;top:849px">Our Staff Available | Fabricator</div>
<div class="t" style="left:7px;top:865px">Our Staff Available | Health &amp; Safety Facilitator</div>
<div class="t" style="left:7px;top:881px">Our Staff Available | Mechanical Craft</div>
<div class="t" style="left:7px;top:897px">Our Staff Available | Mechanical Fitter</div>
<div class="t" style="left:7px;top:913px">Our Staff Available | Pipe Fitter</div>
<div class="t" style="left:7px;top:929px">Our Staff Available | Project Engineer</div>
<div class="t" style="left:7px;top:945px">Our Staff Available | Project Manager</div>
<div class="t" style="left:7px;top:961px">Our Staff Available | Riggers</div>
<div class="t" style="left:7px;top:977px">Our Staff Available | Site Supervisor</div>
<div class="t" style="left:7px;top:993px">Our Staff Available | Welder</div>
<div class="t" style="left:7px;top:1009px;color:#d01818">Total</div>
<div class="hl" style="left:5px;top:864px;width:344px;background:#d8d8d8"></div>
<div class="hl" style="left:5px;top:880px;width:344px;background:#d8d8d8"></div>
<div class="hl" style="left:5px;top:896px;width:344px;background:#d8d8d8"></div>
<div class="hl" style="left:5px;top:912px;width:344px;background:#d8d8d8"></div>
<div class="hl" style="left:5px;top:928px;width:344px;background:#d8d8d8"></div>
<div class="hl" style="left:5px;top:944px;width:344px;background:#d8d8d8"></div>
<div class="hl" style="left:5px;top:960px;width:344px;background:#d8d8d8"></div>
<div class="hl" style="left:5px;top:976px;width:344px;background:#d8d8d8"></div>
<div class="hl" style="left:5px;top:992px;width:344px;background:#d8d8d8"></div>
<div class="hl" style="left:5px;top:1008px;width:344px;background:#d8d8d8"></div>
<div class="hl" style="left:5px;top:1024px;width:344px;background:#d8d8d8"></div>
<div class="vl" style="left:5px;top:848px;height:179px;background:#d0d0d0"></div>
<div class="vl" style="left:348px;top:848px;height:177px;background:#bdbdbd"></div>
<div class="a" style="left:1693px;top:849px;width:17px;height:176px;background:#f0f0f0"></div>
<svg class="a" style="left:1697px;top:855px" width="9" height="6" viewBox="0 0 9 6" fill="none" stroke="#505050" stroke-width="1.900"><path d="M1.100 5L4.500 1.500 7.900 5"/></svg>
<svg class="a" style="left:1697px;top:1015px" width="9" height="6" viewBox="0 0 9 6" fill="none" stroke="#505050" stroke-width="1.900"><path d="M1.100 1L4.500 4.500 7.900 1"/></svg>
<div class="hl" style="left:5px;top:1026px;width:1706px;background:#d4d4d4"></div>
<div class="vl" style="left:1710px;top:163px;height:864px;background:#dadada"></div>
<svg class="a" style="left:1716px;top:146px" width="16" height="12" viewBox="0 0 16 12"><rect x="0" y="0" width="16" height="12" fill="#dedede"/><g stroke="#8c8c8c" stroke-width="1"><path d="M5.500 2.500h9M5.500 5.500h9M5.500 8.500h9"/></g><g stroke="#b8b8b8" stroke-width="1"><path d="M6 10.500h8"/></g><path d="M2.800 1.500v4.500" stroke="#ee8a3c" stroke-width="1.300"/><path d="M2.800 7v3" stroke="#c8c8c8" stroke-width="1"/></svg>
<div class="t" style="left:1733px;top:145px">Roles</div>
<div class="a" style="left:1714px;top:163px;width:201px;height:864px;border:1px solid #d4d4d4;border-top-color:#e0e0e0;background:#fff"></div>
<div class="role" style="top:163px;background:#99cc99;color:#000">Fabricator</div>
<div class="role" style="top:195px;background:#ffcce6;color:#000">Health &amp; Safety Facilitator</div>
<div class="role" style="top:227px;background:#ff8080;color:#000">Mechanical Craft</div>
<div class="role" style="top:259px;background:#f2f25a;color:#000">Mechanical Fitter</div>
<div class="role" style="top:291px;background:#9980e6;color:#000">Pipe Fitter</div>
<div class="role" style="top:323px;background:#336666;color:#fff">Project Engineer</div>
<div class="role" style="top:355px;background:#99b3ff;color:#000">Project Manager</div>
<div class="role" style="top:387px;background:#ffb366;color:#000">Rigger</div>
<div class="role" style="top:419px;background:#6680e6;color:#000">Site Supervisor</div>
<div class="role" style="top:451px;background:#e6e6cc;color:#000">Welder</div>
<div class="a" style="left:0;top:1029px;width:1920px;height:21px;background:#fbfbfb"></div>
<div class="a" style="left:0px;top:1032px;width:1370px;height:18px;background:#fff;border:1px solid #dadada"></div>
<div class="a" style="left:1378px;top:1032px;width:280px;height:18px;background:#fff;border:1px solid #dadada"></div>
<div class="a" style="left:1666px;top:1032px;width:25px;height:18px;background:#fff;border:1px solid #dadada"></div>
<div class="a" style="left:1699px;top:1032px;width:25px;height:18px;background:#fff;border:1px solid #dadada"></div>
<div class="a" style="left:1732px;top:1032px;width:60px;height:18px;background:#fff;border:1px solid #dadada"></div>
<div class="a" style="left:1800px;top:1032px;width:122px;height:18px;background:#fff;border:1px solid #dadada"></div>
<div class="t" style="left:3px;top:1034px;color:#333;letter-spacing:-0.12px">Job Schedule - (All) - (All)*</div>
<svg class="a" style="left:1381px;top:1033px" width="17" height="15" viewBox="0 0 17 15"><rect x="0" y="1" width="15" height="9" fill="#3b4252"/><path d="M5 10h5l2 3.500H3z" fill="#e8a020"/><path d="M12.500 0l1.100 2.400 2.600.3-1.900 1.700.5 2.600-2.300-1.300-2.300 1.300.5-2.600-1.900-1.700 2.600-.3z" fill="#f08a1c"/></svg>
<div class="t" style="left:1400px;top:1034px;color:#333">01a - Job Planner</div>
<svg class="a" style="left:1669px;top:1035px" width="18" height="13" viewBox="0 0 18 13"><rect width="18" height="13" fill="#d8d8d8"/><rect x="1" y="1" width="5" height="4" fill="#e08070"/><rect x="7" y="1" width="10" height="4" fill="#b8c8d8"/><rect x="1" y="6" width="8" height="3" fill="#90b8d0"/><rect x="10" y="6" width="7" height="6" fill="#c8a890"/><rect x="1" y="10" width="8" height="2" fill="#a8d0a8"/></svg>
<svg class="a" style="left:1703px;top:1033px" width="17" height="16" viewBox="0 0 17 16"><path d="M0.700 0v14.500H16" fill="none" stroke="#222" stroke-width="1.400"/><rect x="3" y="2" width="7" height="2" fill="#2f8f6a"/><rect x="6" y="5.500" width="8" height="2" fill="#e8c040"/><rect x="4" y="9" width="6" height="2" fill="#3fb58a"/><rect x="9" y="11.500" width="5" height="2" fill="#3fb58a"/></svg>
<svg class="a" style="left:1737px;top:1033px" width="13" height="16" viewBox="0 0 13 16"><ellipse cx="6.300" cy="4" rx="3.100" ry="3.700" fill="#6872c4"/><path d="M0 16c0-4.500 1.500-6.500 4.500-7l1.800 1 1.800-1c3 .5 4.500 2.500 4.500 7z" fill="#6872c4"/></svg>
<div class="t" style="left:1755px;top:1034px;color:#333">1</div>
<div class="t" style="left:1808px;top:1034px;color:#333">GB 05/04/2019 12:43</div>
</body></html>
